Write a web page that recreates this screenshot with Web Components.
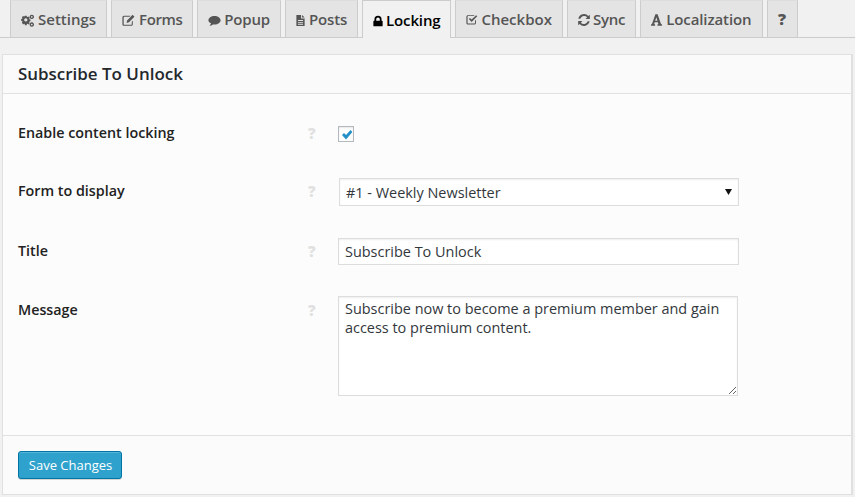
<!DOCTYPE html>
<html>
<head>
<meta charset="utf-8">
<title>Subscribe To Unlock</title>
<style>
  html, body { margin: 0; padding: 0; background: #f1f1f1; }
  body { font-family: "Open Sans", sans-serif; color: #222; height: 497px; overflow: hidden; }
</style>
</head>
<body>

<template id="tab-tpl">
  <style>
    :host { display: block; }
    a {
      display: flex; align-items: center; gap: 3px;
      height: 37px; padding: 0 10px; box-sizing: border-box;
      background: #e4e4e4; border: 1px solid #ccc; border-top-color: #ddd; border-bottom: 0;
      color: #555; font-size: 15px; font-weight: 600; line-height: 20px; white-space: nowrap;
    }
    :host([active]) a { background: #f1f1f1; color: #000; height: 38px; margin-bottom: -1px; border-color: #ccc; }
    ::slotted(svg) { fill: currentColor; display: block; flex: none; margin-top: 2px; }
  </style>
  <a><slot name="icon"></slot><slot></slot></a>
</template>

<template id="tabs-tpl">
  <style>
    :host { display: flex; gap: 4px; height: 38px; box-sizing: border-box; padding-left: 10px; border-bottom: 1px solid #ccc; }
  </style>
  <slot></slot>
</template>

<template id="panel-tpl">
  <style>
    :host { display: block; margin: 16px 2px 0 2px; background: #fbfbfb; border: 1px solid #e0e0e0; border-width: 1px 2px 2px 1px; height: 441px; box-sizing: border-box; }
    header { box-sizing: border-box; padding: 0 0 1px 15px; display: flex; align-items: center; background: #fafafa; font-size: 16.950px; font-weight: 600; color: #23282d; border-bottom: 1px solid #e2e2e2; height: 39px; }
    main { height: 342px; box-sizing: border-box; padding-top: 29px; display: grid; align-content: start; border-bottom: 1px solid #e0e0e0; background: #fcfcfc; }
    footer { padding: 15px; background: #fbfbfb; }
  </style>
  <header><slot name="title"></slot></header>
  <main><slot></slot></main>
  <footer><slot name="footer"></slot></footer>
</template>

<template id="row-tpl">
  <style>
    :host { display: grid; grid-template-columns: 290px 30px 1fr; padding-left: 15px; box-sizing: border-box; }
    label { font-size: 14.3px; font-weight: 600; color: #222; line-height: 20px; }
    .help { font-size: 15px; font-weight: 800; color: #e1e1e1; line-height: 20px; }
  </style>
  <label><slot name="label"></slot></label>
  <span class="help">?</span>
  <div><slot></slot></div>
</template>

<template id="check-tpl">
  <style>
    :host { display: block; width: 16px; height: 16px; position: relative; }
    input { appearance: none; -webkit-appearance: none; display: block; margin: 0; width: 16px; height: 16px; box-sizing: border-box; border: 1px solid #b4b9be; background: #fff; box-shadow: inset 0 1px 2px rgba(0,0,0,.1); }
    svg { position: absolute; left: 3.500px; top: 4px; width: 10.500px; height: 9.500px; fill: #2590c8; pointer-events: none; }
  </style>
  <input type="checkbox" checked aria-label="Enable content locking">
  <svg viewBox="0 0 10.500 9.500"><path d="M0 5 2 3 4 5 8.500 0 10.500 2 4 9.500z"/></svg>
</template>

<template id="field-tpl">
  <style>
    :host { display: block; position: relative; }
    select, input, textarea {
      display: block; margin: 0; box-sizing: border-box; font: 14.450px/19px "Open Sans", sans-serif; color: #32373c;
      background: #fff; border: 1px solid #ddd; box-shadow: inset 0 1px 2px rgba(0,0,0,.07); border-radius: 0; outline: 0;
    }
    select { appearance: none; -webkit-appearance: none; width: 400px; height: 28px; margin-left: 1px; padding: 0 6px; }
    input { width: 401px; height: 27px; padding: 0 6px; }
    textarea { width: 400px; height: 100px; padding: 2px 6px; }
    .arrow { position: absolute; left: 387px; top: 11px; width: 7px; height: 6px; fill: #111; pointer-events: none; }
  </style>
</template>

<template id="btn-tpl">
  <style>
    :host { display: inline-block; }
    button {
      display: block; width: 104px; height: 28px; padding: 0 0 0 1px; box-sizing: border-box;
      background: #2ea2cc; border: 1px solid #0074a2; border-radius: 3px; color: #fff;
      font: 13px/26px "Open Sans", sans-serif; box-shadow: inset 0 1px 0 rgba(120,200,230,.5), 0 1px 0 rgba(0,0,0,.15);
    }
  </style>
  <button><slot></slot></button>
</template>

<plugin-tabs>
  <plugin-tab><svg slot="icon" width="13" height="13" viewBox="0 0 16 16" style="margin-right:1px"><path fill-rule="evenodd" d="M4.800 3h2.400l.3 1.400 1 .4 1.200-.8 1.700 1.700-.8 1.200.4 1 1.400.3v2.400l-1.400.3-.4 1 .8 1.200-1.700 1.700-1.200-.8-1 .4-.3 1.400H4.800l-.3-1.400-1-.4-1.200.8L.6 12.300l.8-1.200-.4-1L-.4 9.800V7.400L1 7.100l.4-1L.6 4.900 2.300 3.200l1.200.8 1-.4zM6 6.400a2.200 2.200 0 1 0 .01 0z" transform="translate(.5 -.5) scale(.9)"/><path fill-rule="evenodd" d="M13.300 .8a2.700 2.700 0 1 1-.01 0zM13.300 2.600a.9.900 0 1 0 .01 0zM13.300 10.300a2.700 2.700 0 1 1-.01 0zM13.300 12.100a.9.900 0 1 0 .01 0z"/></svg>Settings</plugin-tab>
  <plugin-tab style="letter-spacing:-.4px"><svg slot="icon" width="13" height="13" viewBox="0 0 16 16" style="margin-right:1px"><path d="M2.500 2h8l-1.300 1.300H2.800a.7.7 0 0 0-.7.7v8.500c0 .4.300.7.700.7h8.500c.4 0 .7-.3.700-.7V9.500l1.300-1.300v4.300c0 1.200-.9 2-2 2H2.500c-1.100 0-2-.8-2-2V4c0-1.100.9-2 2-2z"/><path d="M13 1l2.300 2.300-6.700 6.900-3 .8.700-3.100z"/></svg>Forms</plugin-tab>
  <plugin-tab style="letter-spacing:-.2px"><svg slot="icon" width="13" height="13" viewBox="0 0 16 16"><path d="M8 2.500c4.200 0 7.500 2.400 7.500 5.300S12.200 13 8 13c-.7 0-1.300 0-1.900-.2C5 13.700 3.500 14.300 1.800 14.500c1-.9 1.700-2 1.900-3C1.700 10.600.5 9.300.5 7.800.5 4.900 3.800 2.500 8 2.500z"/></svg>Popup</plugin-tab>
  <plugin-tab style="letter-spacing:-.15px"><svg slot="icon" width="9" height="11" viewBox="2.500 1 10.500 14" style="margin-right:1px"><path fill-rule="evenodd" d="M2.500 1H8.500v4.500H13V15H2.500zM9.700 1 13 4.300H9.700zM4.500 7.500v1.200h6.500V7.500zM4.500 9.800V11h6.500V9.800zM4.500 12.100v1.200h6.500v-1.200z"/></svg>Posts</plugin-tab>
  <plugin-tab active style="letter-spacing:-.15px"><svg slot="icon" width="10" height="12" viewBox="1 0 14 15"><path fill-rule="evenodd" d="M3 7V5a5 5 0 0 1 10 0v2h.5c.6 0 1 .4 1 1v6c0 .6-.4 1-1 1h-11c-.6 0-1-.4-1-1V8c0-.6.400-1 1-1zM5.500 7h5V5a2.500 2.500 0 0 0-5 0z"/></svg>Locking</plugin-tab>
  <plugin-tab><svg slot="icon" width="12" height="12" viewBox="0 1 16 15"><path d="M2.500 2h8.500v1.300H2.800a.7.7 0 0 0-.7.7v8.500c0 .4.300.7.700.7h8.500c.4 0 .7-.3.700-.7V9.500l1.300-1.300v4.300c0 1.200-.9 2-2 2H2.500c-1.100 0-2-.8-2-2V4c0-1.100.9-2 2-2z"/><path d="M3.800 7.200 5.300 5.700 7.500 7.900 13.500 2 15 3.500 7.500 11z"/></svg>Checkbox</plugin-tab>
  <plugin-tab style="letter-spacing:-.25px"><svg slot="icon" width="12" height="12" viewBox="1 1 14 14"><path d="M14.800 1.800v5h-5l1.900-1.900A4.700 4.700 0 0 0 3.700 6.500H1.400a6.900 6.900 0 0 1 11.700-3.200z"/><path d="M1.200 14.200v-5h5l-1.900 1.900a4.700 4.700 0 0 0 8-1.600h2.300a6.900 6.900 0 0 1-11.700 3.200z"/></svg>Sync</plugin-tab>
  <plugin-tab style="letter-spacing:-.1px"><svg slot="icon" width="11" height="12" viewBox="0 .5 14.500 15" style="margin-right:1px"><path fill-rule="evenodd" d="M0 15.500v-1.700l1.300-.4L5.800.5h2.900l4.500 12.900 1.300.4v1.700H8.500v-1.700l1.200-.4-.7-2.400H4.900l-.8 2.400 1.300.4v1.700zM7 4.300 5.500 9h3z"/></svg>Localization</plugin-tab>
  <plugin-tab style="font-size:0"><span style="font-size:16px;font-weight:800;display:block;width:9px;text-align:center">?</span></plugin-tab>
</plugin-tabs>

<settings-panel>
  <span slot="title">Subscribe To Unlock</span>
  <form-row style="height:58px">
    <span slot="label">Enable content locking</span>
    <check-box style="margin-top:3px"></check-box>
  </form-row>
  <form-row style="height:60px">
    <span slot="label">Form to display</span>
    <select-field value="#1 - Weekly Newsletter" style="margin-top:-3px"></select-field>
  </form-row>
  <form-row style="height:59px">
    <span slot="label">Title</span>
    <text-field value="Subscribe To Unlock" style="margin-top:-3px"></text-field>
  </form-row>
  <form-row>
    <span slot="label">Message</span>
    <area-field style="margin-top:-4px">Subscribe now to become a premium member and gain access to premium content.</area-field>
  </form-row>
  <save-button slot="footer">Save Changes</save-button>
</settings-panel>

<script>
  // plain elements: clone the template, nothing else
  function simple(name, tpl) {
    customElements.define(name, class extends HTMLElement {
      constructor() {
        super();
        this.attachShadow({ mode: 'open' }).appendChild(document.getElementById(tpl).content.cloneNode(true));
      }
    });
  }
  simple('plugin-tabs', 'tabs-tpl');
  simple('plugin-tab', 'tab-tpl');
  simple('settings-panel', 'panel-tpl');
  simple('form-row', 'row-tpl');
  simple('check-box', 'check-tpl');
  simple('save-button', 'btn-tpl');

  class FieldBase extends HTMLElement {
    constructor() {
      super();
      this.attachShadow({ mode: 'open' }).appendChild(document.getElementById('field-tpl').content.cloneNode(true));
    }
  }
  customElements.define('select-field', class extends FieldBase {
    connectedCallback() {
      const s = document.createElement('select');
      const o = document.createElement('option');
      o.textContent = this.getAttribute('value');
      s.appendChild(o);
      this.shadowRoot.appendChild(s);
      this.shadowRoot.appendChild(document.createRange().createContextualFragment(
        '<svg class="arrow" viewBox="0 0 7 6"><path d="M0 0h7L3.500 6z"/></svg>'));
    }
  });
  customElements.define('text-field', class extends FieldBase {
    connectedCallback() {
      const i = document.createElement('input');
      i.type = 'text';
      i.setAttribute('value', this.getAttribute('value'));
      this.shadowRoot.appendChild(i);
    }
  });
  customElements.define('area-field', class extends FieldBase {
    connectedCallback() {
      const t = document.createElement('textarea');
      t.textContent = this.textContent;
      this.shadowRoot.appendChild(t);
    }
  });
</script>
</body>
</html>
